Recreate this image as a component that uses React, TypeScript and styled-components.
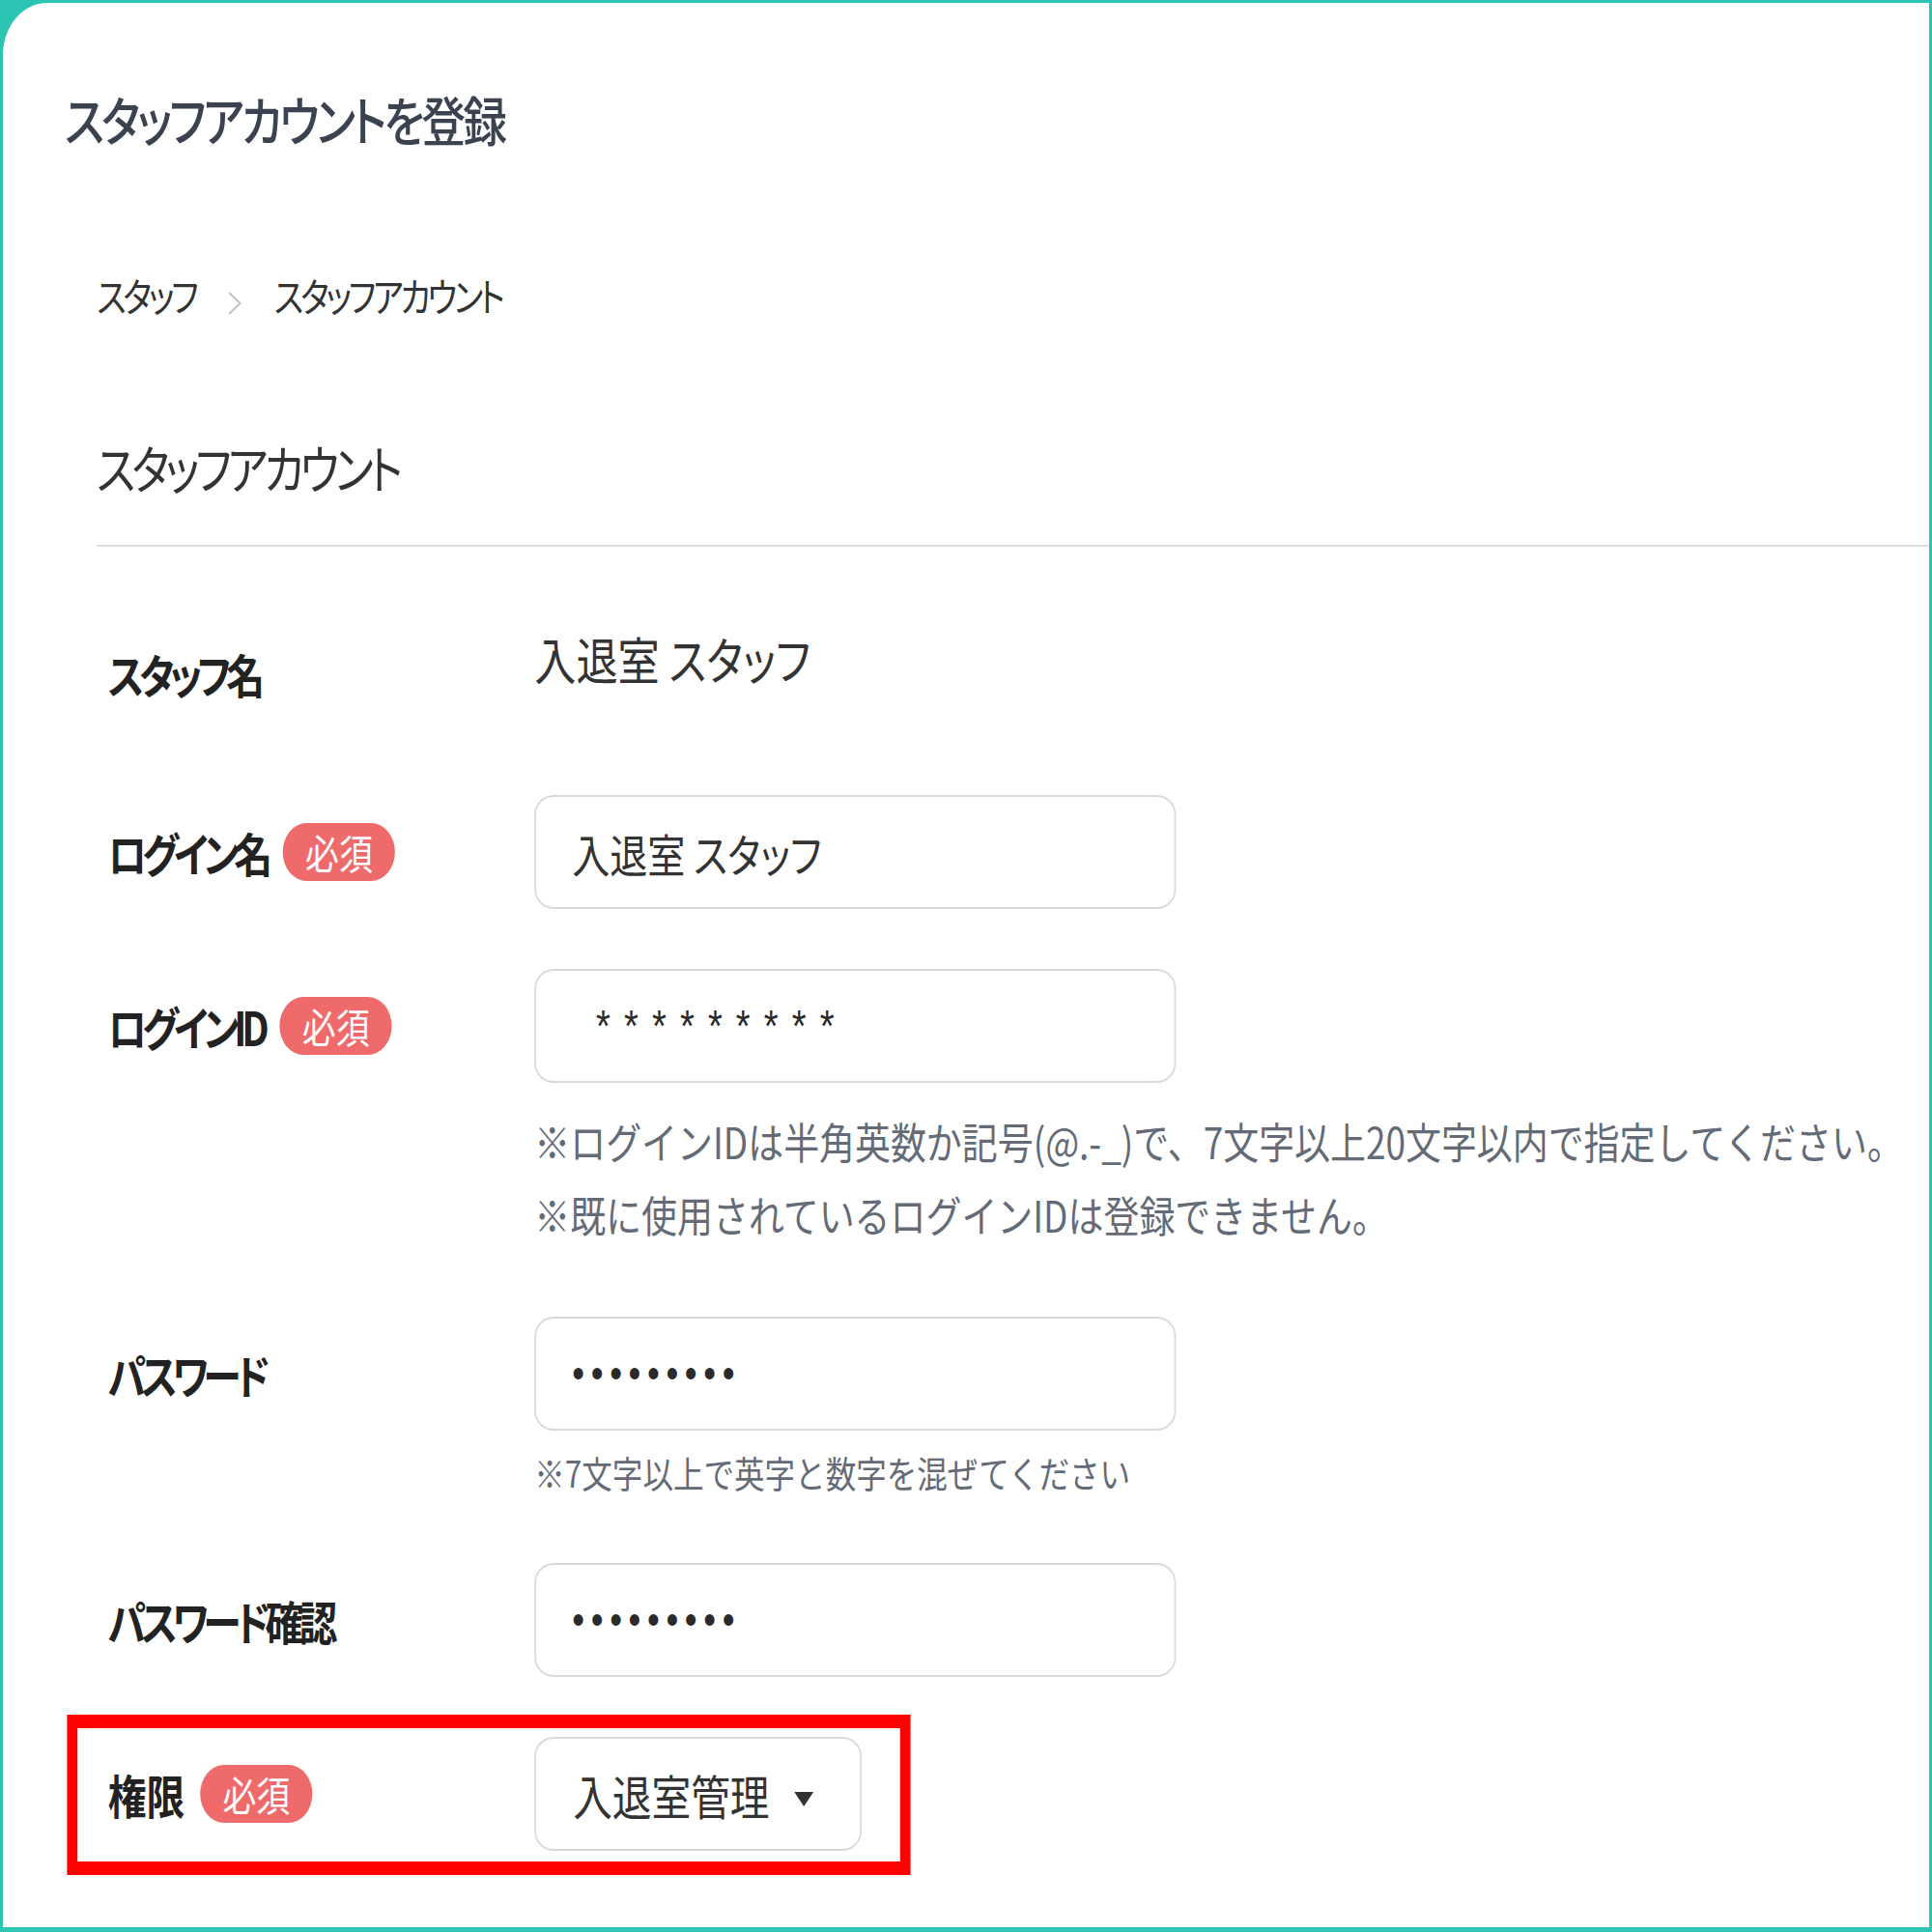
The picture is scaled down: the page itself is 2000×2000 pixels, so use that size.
import React from 'react';
import styled, { createGlobalStyle, css } from 'styled-components';

// the admin screen is drawn on a narrow canvas and squeezed sideways
const SQUASH = 0.83;

const GlobalStyle = createGlobalStyle`
  html, body {
    margin: 0;
    padding: 0;
    background: #ffffff;
    overflow: hidden;
  }
  body {
    font-family: 'Noto Sans CJK JP', 'Noto Sans', sans-serif;
    color: #333333;
  }
  * {
    box-sizing: border-box;
  }
`;

const Frame = styled.div`
  width: 2000px;
  height: 2000px;
  padding: 3px 3px 5px 3px;
  background: #2cc4b3;
`;

const Panel = styled.div`
  height: 100%;
  background: #ffffff;
  border-top-left-radius: 46px 54px;
  overflow: hidden;
`;

const Canvas = styled.div`
  width: calc(100% / ${SQUASH});
  transform: scaleX(${SQUASH});
  transform-origin: 0 0;
  font-feature-settings: 'palt';
`;

const PageTitle = styled.h1`
  margin: 0;
  padding: 92px 0 0 77px;
  font-size: 55px;
  line-height: 1;
  font-weight: 500;
  letter-spacing: -3.5px;
  color: #3b4351;
`;

const Body = styled.div`
  padding-left: 117px;
`;

const Breadcrumbs = styled.nav`
  display: flex;
  align-items: flex-start;
  gap: 40px;
  margin-top: 135px;
  font-size: 41px;
  line-height: 1;
  letter-spacing: -4px;
  color: #333333;
`;

const Crumb = styled.span``;

const Chevron = styled.svg`
  flex: none;
  margin-top: 16px;
`;

const SectionTitle = styled.h2`
  margin: 130px 0 0;
  font-size: 54px;
  line-height: 1;
  font-weight: 400;
  letter-spacing: -5px;
  color: #333333;
`;

const Divider = styled.hr`
  margin: 53px 0 0;
  border: 0;
  height: 2px;
  background: #dedede;
`;

const Form = styled.form`
  display: flex;
  flex-direction: column;
  align-items: flex-start;
  padding: 90px 0 0 14px;
`;

const Field = styled.div<{ $top: number; $highlight?: boolean }>`
  display: grid;
  grid-template-columns: 532px auto;
  align-items: start;
  margin-top: ${(p) => p.$top}px;

  ${(p) =>
    p.$highlight &&
    css`
      margin-left: -51.5px;
      padding: 9px 48px 11px 38.5px;
      border: 13px solid #ff0000;
      border-top-width: 14px;
      border-bottom-width: 14px;
    `}
`;

const LabelCell = styled.div<{ $plain?: boolean }>`
  display: flex;
  align-items: center;
  gap: 19px;
  height: ${(p) => (p.$plain ? 'auto' : '118px')};
  padding-top: ${(p) => (p.$plain ? '17px' : '0')};
`;

const LabelText = styled.label<{ $tracking?: number }>`
  font-size: 48px;
  line-height: 1;
  font-weight: 700;
  letter-spacing: ${(p) => p.$tracking ?? -6}px;
  color: #222222;
`;

const RequiredBadge = styled.span`
  display: inline-flex;
  align-items: center;
  justify-content: center;
  width: 140px;
  height: 60px;
  border-radius: 30px;
  background: #ef6b6b;
  color: #ffffff;
  font-size: 42px;
  line-height: 1;
`;

const Control = styled.div`
  display: flex;
  flex-direction: column;
  align-items: flex-start;
`;

const StaticValue = styled.span`
  font-size: 52px;
  line-height: 1;
  color: #333333;
`;

const TextInput = styled.input`
  width: 800px;
  height: 118px;
  padding: 0 45px;
  border: 2px solid #d9d9d9;
  border-radius: 24px / 20px;
  background: #ffffff;
  font-family: inherit;
  font-size: 47px;
  color: #333333;
  font-feature-settings: 'palt';
  outline: none;
`;

const MaskedInput = styled(TextInput)<{ $size: number; $spacing: number }>`
  font-family: 'Liberation Sans', Arial, sans-serif;
  font-size: ${(p) => p.$size}px;
  letter-spacing: ${(p) => p.$spacing}px;
  color: #2a2a2a;
`;

const HintList = styled.div<{ $top: number }>`
  margin-top: ${(p) => p.$top}px;
`;

const Hint = styled.p<{ $size: number; $lineHeight: number }>`
  margin: 0;
  font-size: ${(p) => p.$size}px;
  line-height: ${(p) => p.$lineHeight}px;
  color: #646b77;
  white-space: nowrap;
  font-feature-settings: normal;
`;

const RoleSelect = styled.button`
  display: inline-flex;
  align-items: center;
  gap: 31px;
  height: 118px;
  padding: 0 58px 0 46px;
  border: 2px solid #d9d9d9;
  border-radius: 24px / 20px;
  background: #ffffff;
  font-family: inherit;
  font-size: 49px;
  line-height: 1;
  color: #333333;
  font-feature-settings: 'palt';
  cursor: pointer;
`;

const Caret = styled.svg`
  flex: none;
  margin-top: 10px;
`;

export default function App() {
  return (
    <>
      <GlobalStyle />
      <Frame>
        <Panel>
          <Canvas>
            <PageTitle>スタッフアカウントを登録</PageTitle>
            <Body>
              <Breadcrumbs>
                <Crumb>スタッフ</Crumb>
                <Chevron width="18" height="26" viewBox="0 0 18 26">
                  <polyline points="2,2 16,13 2,24" fill="none" stroke="#bdbdbd" strokeWidth="2" />
                </Chevron>
                <Crumb>スタッフアカウント</Crumb>
              </Breadcrumbs>

              <SectionTitle>スタッフアカウント</SectionTitle>
              <Divider />

              <Form onSubmit={(e) => e.preventDefault()}>
                <Field $top={0}>
                  <LabelCell $plain>
                    <LabelText>スタッフ名</LabelText>
                  </LabelCell>
                  <StaticValue>入退室 スタッフ</StaticValue>
                </Field>

                <Field $top={102}>
                  <LabelCell>
                    <LabelText>ログイン名</LabelText>
                    <RequiredBadge>必須</RequiredBadge>
                  </LabelCell>
                  <TextInput readOnly defaultValue="入退室 スタッフ" />
                </Field>

                <Field $top={62}>
                  <LabelCell>
                    <LabelText>ログインID</LabelText>
                    <RequiredBadge>必須</RequiredBadge>
                  </LabelCell>
                  <Control>
                    <MaskedInput readOnly defaultValue=" *********" $size={46} $spacing={17} />
                    <HintList $top={21.5}>
                      <Hint $size={44.5} $lineHeight={76}>
                        ※ログインIDは半角英数か記号(@.-_)で、7文字以上20文字以内で指定してください。
                      </Hint>
                      <Hint $size={44.5} $lineHeight={76}>
                        ※既に使用されているログインIDは登録できません。
                      </Hint>
                    </HintList>
                  </Control>
                </Field>

                <Field $top={68.5}>
                  <LabelCell>
                    <LabelText>パスワード</LabelText>
                  </LabelCell>
                  <Control>
                    <MaskedInput readOnly defaultValue="•••••••••" $size={44} $spacing={8} />
                    <HintList $top={24}>
                      <Hint $size={38} $lineHeight={38}>
                        ※7文字以上で英字と数字を混ぜてください
                      </Hint>
                    </HintList>
                  </Control>
                </Field>

                <Field $top={75}>
                  <LabelCell>
                    <LabelText>パスワード確認</LabelText>
                  </LabelCell>
                  <MaskedInput readOnly defaultValue="•••••••••" $size={44} $spacing={8} />
                </Field>

                <Field $top={39} $highlight>
                  <LabelCell>
                    <LabelText $tracking={0}>権限</LabelText>
                    <RequiredBadge>必須</RequiredBadge>
                  </LabelCell>
                  <RoleSelect type="button">
                    入退室管理
                    <Caret width="24" height="15" viewBox="0 0 24 15">
                      <polygon points="0,0 24,0 12,15" fill="#333333" />
                    </Caret>
                  </RoleSelect>
                </Field>
              </Form>
            </Body>
          </Canvas>
        </Panel>
      </Frame>
    </>
  );
}
